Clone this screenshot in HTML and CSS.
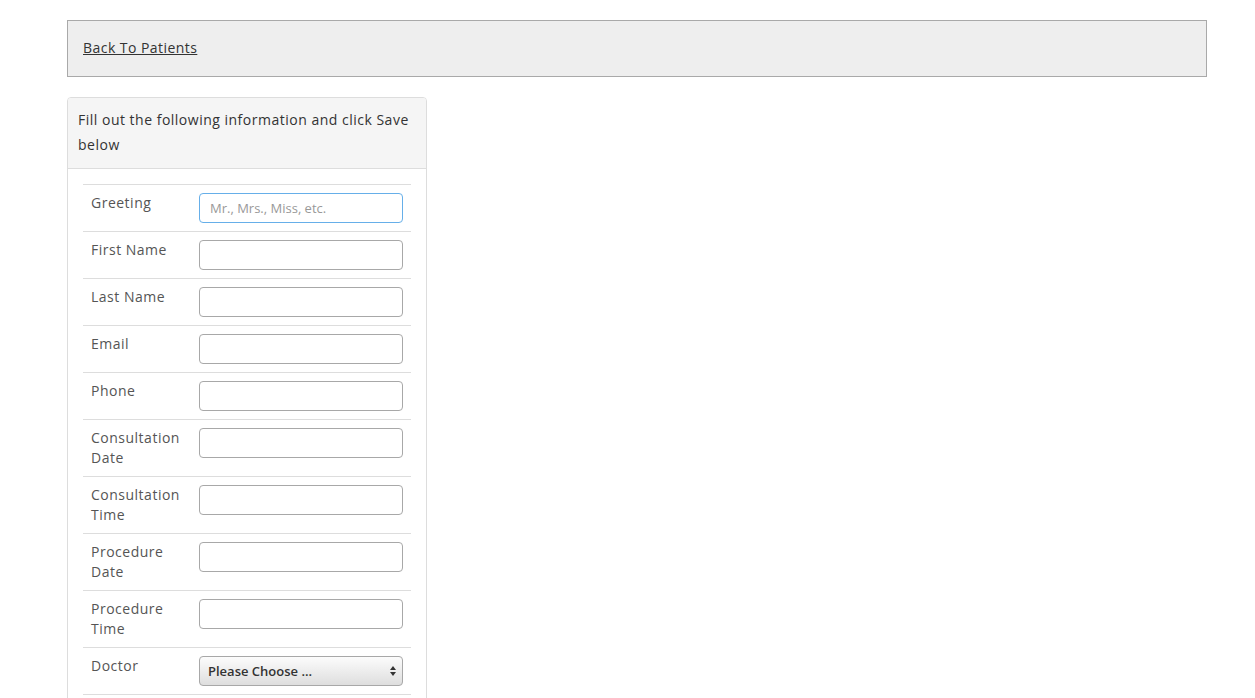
FILE: index.html
```html
<!DOCTYPE html>
<html>
<head>
<meta charset="utf-8">
<link rel="stylesheet" href="styles.css">
</head>
<body>
<div class="page">
  <div class="topbar"><a href="#" class="back">Back To Patients</a></div>
  <div class="panel">
    <div class="panel-head">Fill out the following information and click Save below</div>
    <div class="panel-body">
      <table class="form">
        <tr><td class="lbl">Greeting</td><td class="fld"><input class="inp focus" type="text" placeholder="Mr., Mrs., Miss, etc."></td></tr>
        <tr><td class="lbl">First Name</td><td class="fld"><input class="inp" type="text"></td></tr>
        <tr><td class="lbl">Last Name</td><td class="fld"><input class="inp" type="text"></td></tr>
        <tr><td class="lbl">Email</td><td class="fld"><input class="inp" type="text"></td></tr>
        <tr><td class="lbl">Phone</td><td class="fld"><input class="inp" type="text"></td></tr>
        <tr><td class="lbl">Consultation<br>Date</td><td class="fld"><input class="inp" type="text"></td></tr>
        <tr><td class="lbl">Consultation<br>Time</td><td class="fld"><input class="inp" type="text"></td></tr>
        <tr><td class="lbl">Procedure<br>Date</td><td class="fld"><input class="inp" type="text"></td></tr>
        <tr><td class="lbl">Procedure<br>Time</td><td class="fld"><input class="inp" type="text"></td></tr>
        <tr><td class="lbl">Doctor</td><td class="fld"><div class="sel"><span>Please Choose ...</span><svg class="arrows" width="6" height="10" viewBox="0 0 6 10"><path d="M3 0 L6 4 H0 Z M3 10 L6 6 H0 Z" fill="#333"/></svg></div></td></tr>
        <tr><td class="lbl">&nbsp;</td><td class="fld"></td></tr>
      </table>
    </div>
  </div>
</div>
</body>
</html>
```

FILE: styles.css
```css
* { box-sizing: border-box; }
html, body { margin: 0; padding: 0; background: #fff; }
body {
  font-family: "Open Sans", "DejaVu Sans", sans-serif;
  font-size: 14px;
  color: #333;
  overflow: hidden;
  height: 698px;
}
.page {
  padding: 20px 48px 0 67px;
  height: 698px;
  overflow: hidden;
}
.topbar {
  height: 57px;
  background: #eee;
  border: 1px solid #a9a9a9;
  padding: 0 15px;
  display: flex;
  align-items: center;
  width: 1140px;
}
.back {
  color: #333;
  text-decoration: underline;
  font-size: 14px;
  letter-spacing: 0.45px;
  position: relative;
  top: -1px;
}
.panel {
  margin-top: 20px;
  width: 360px;
  border: 1px solid #ddd;
  border-radius: 4px;
}
.panel-head {
  background: #f5f5f5;
  border-bottom: 1px solid #ddd;
  padding: 9px 10px 11px;
  line-height: 25px;
  color: #333;
  letter-spacing: 0.5px;
  border-radius: 3px 3px 0 0;
}
.panel-body {
  padding: 15px 15px 0;
}
.form {
  width: 100%;
  border-collapse: collapse;
}
.form td {
  border-top: 1px solid #ddd;
  padding: 8px;
  vertical-align: top;
}
.lbl {
  width: 108px;
  color: #555;
  line-height: 20px;
  letter-spacing: 0.5px;
  white-space: nowrap;
}
.fld { height: 46px; }
.inp {
  display: block;
  width: 204px;
  height: 30px;
  border: 1px solid #a8a8a8;
  border-radius: 4px;
  padding: 0 10px;
  font-family: inherit;
  font-size: 13px;
  color: #555;
  outline: none;
  background: #fff;
}
.inp.focus { border-color: #66afe9; }
.inp::placeholder { color: #999; }
.sel {
  width: 204px;
  height: 30px;
  border: 1px solid #a8a8a8;
  border-radius: 4px;
  background: linear-gradient(#fcfcfc, #dedede);
  display: flex;
  align-items: center;
  justify-content: space-between;
  padding: 0 6px 0 8px;
  font-size: 13px;
  font-weight: 600;
  color: #333;
}
```
